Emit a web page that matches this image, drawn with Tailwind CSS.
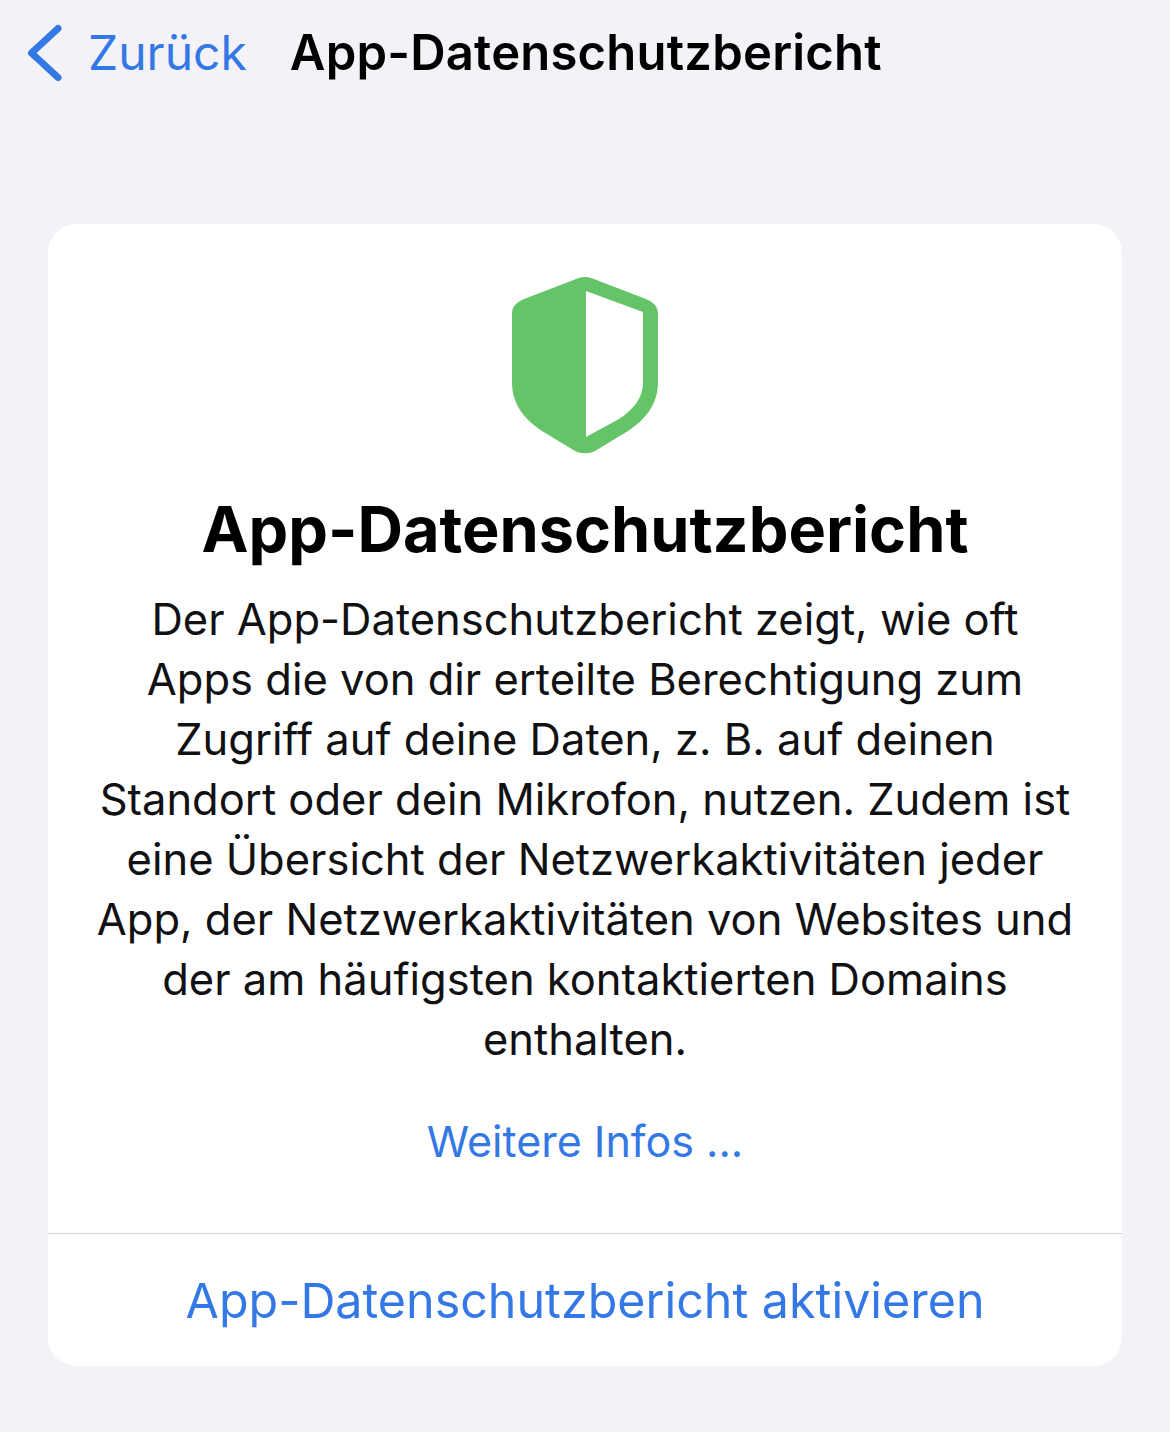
<!DOCTYPE html>
<html lang="de">
<head>
<meta charset="UTF-8">
<meta name="viewport" content="width=device-width, initial-scale=1.0">
<title>App-Datenschutzbericht</title>
<script src="https://cdn.jsdelivr.net/npm/@tailwindcss/browser@4"></script>
</head>
<body class="bg-[#f2f2f7] h-[1432px] overflow-hidden font-['Inter',sans-serif] text-black">
    <!-- Navigation -->
    <div class="flex items-center h-[106px] pl-[28px]">
        <svg class="w-[34px] h-[58px]" viewBox="0 0 34 58" fill="none">
            <path d="M30 4.5 L3.5 29 L30 53.5" stroke="#3478e5" stroke-width="7" stroke-linecap="round" stroke-linejoin="round"/>
        </svg>
        <span class="ml-[26px] text-[48px] text-[#3478e5]">Zurück</span>
        <span class="ml-[43px] text-[49px] font-semibold tracking-[0.2px]">App-Datenschutzbericht</span>
    </div>

    <!-- Karte -->
    <div class="mx-[48px] mt-[118px] h-[1142px] bg-white rounded-[28px] flex flex-col items-center">
        <svg class="mt-[52px] w-[148px] h-[178px]" viewBox="0 0 148 178" fill="none">
            <path d="M74 1 C79 1 83 3 88 5 L135 23 C142 26 147 30 147 38 V106 C147 128 135 143 117 155 L84 175 C78 178 70 178 64 175 L31 155 C13 143 1 128 1 106 V38 C1 30 6 26 13 23 L60 5 C65 3 69 1 74 1 Z" fill="#65c468"/>
            <path d="M75 15 L132 36 V106 C132 122 123 133 108 143 L75 161 Z" fill="white"/>
        </svg>
        <h1 class="mt-[39px] text-[63px] leading-[72px] font-bold">App-Datenschutzbericht</h1>
        <p class="mt-[24px] w-full text-center text-[43.5px] leading-[60px] text-[#111113]">
            Der App-Datenschutzbericht zeigt, wie oft<br>
            Apps die von dir erteilte Berechtigung zum<br>
            Zugriff auf deine Daten, z. B. auf deinen<br>
            Standort oder dein Mikrofon, nutzen. Zudem ist<br>
            eine Übersicht der Netzwerkaktivitäten jeder<br>
            App, der Netzwerkaktivitäten von Websites und<br>
            der am häufigsten kontaktierten Domains<br>
            enthalten.
        </p>
        <a class="mt-[42px] text-[43px] leading-[60px] text-[#3478e5]">Weitere Infos ...</a>
        <div class="mt-[62px] w-full border-t border-[#d1d1d6]"></div>
        <a class="flex-1 flex items-center pt-[2px] text-[48.4px] text-[#3478e5]">App-Datenschutzbericht aktivieren</a>
    </div>
</body>
</html>
